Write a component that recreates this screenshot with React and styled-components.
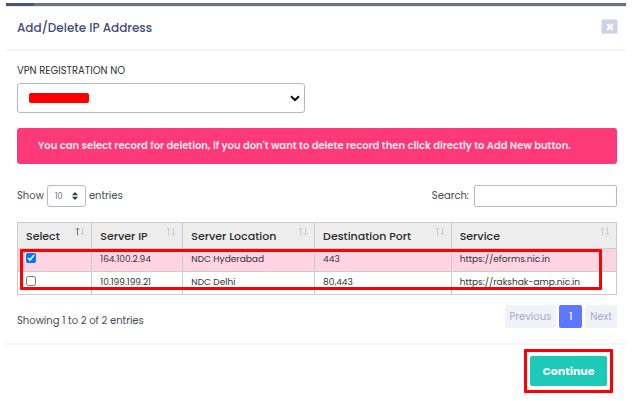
import React, { useState } from "react";
import styled, { createGlobalStyle } from "styled-components";

const Global = createGlobalStyle`
  *, *::before, *::after { box-sizing: border-box; }
  body { margin: 0; background: #fff; }
  body, button, input, select { font-family: Poppins, Inter, sans-serif; }
`;

const Page = styled.div`
  padding: 3px 7px 0 6px;
  color: #4a4b50;
  font-size: 10px;
  line-height: 16px;
`;

const Backdrop = styled.div`
  height: 3px;
  background: linear-gradient(to right, #4b5573 28px, #6f727c 28px);
`;

const Modal = styled.section`
  border-top: 1px solid #e6e9f5;
  background: #fff;
`;

const Header = styled.header`
  display: flex;
  align-items: flex-start;
  justify-content: space-between;
  height: 44px;
  padding: 12px 8px 0 11px;
  border-bottom: 2px solid #f3f3f8;
`;

const Title = styled.h1`
  margin: 1px 0 0;
  font-size: 12px;
  line-height: 16px;
  font-weight: 500;
  color: #464c75;
`;

const CloseButton = styled.button`
  display: grid;
  place-items: center;
  width: 17px;
  height: 15px;
  padding: 0;
  border: 1px solid #e2e5f0;
  border-radius: 2px;
  background: #ced3e4;
`;

const Body = styled.div`
  padding: 12px 9px 14px 11px;
`;

const FieldLabel = styled.label`
  display: block;
  margin-bottom: 4px;
  font-size: 10px;
  color: #333;
`;

const SelectBox = styled.div`
  display: grid;
  width: 48%;
  align-items: center;

  > * { grid-area: 1 / 1; }
  > svg { justify-self: end; margin-right: 5px; pointer-events: none; }
`;

const RegistrationSelect = styled.select`
  appearance: none;
  width: 100%;
  height: 30px;
  border: 1px solid #b4b7cb;
  border-radius: 3px;
  background: #fff;
`;

const Redaction = styled.span`
  width: 60px;
  height: 10px;
  margin-left: 12px;
  border-radius: 2px;
  background: #f00;
  pointer-events: none;
`;

const Alert = styled.div`
  margin-top: 15px;
  padding: 10px 21px;
  border-radius: 3px;
  background: #fd397a;
  color: #ffe6ee;
  font-size: 10px;
  font-weight: 600;
  white-space: nowrap;
`;

const Controls = styled.div`
  display: flex;
  justify-content: space-between;
  margin: 21px 0 15px;
`;

const ControlLabel = styled.label`
  display: flex;
  align-items: center;
  gap: 3px;
`;

const LengthBox = styled.span`
  display: grid;
  align-items: center;
  width: 39px;

  > * { grid-area: 1 / 1; }
  > svg { justify-self: end; margin-right: 8px; pointer-events: none; }
`;

const LengthSelect = styled.select`
  appearance: none;
  width: 100%;
  height: 22px;
  padding: 0 7px;
  border: 1px solid #b4b7cb;
  border-radius: 3px;
  background: #fff;
  color: #6c6f7c;
  font-size: 8px;
`;

const SearchInput = styled.input`
  width: 143px;
  height: 22px;
  margin-left: 2px;
  padding: 0 8px;
  border: 1px solid #b4b7cb;
  border-radius: 2px;
  background: #fff;
`;

const TableWrap = styled.div`
  position: relative;
`;

const RowsMarker = styled.div`
  position: absolute;
  inset: 27px 15px 5px 3px;
  border: 3px solid #f00;
  border-radius: 1px;
  pointer-events: none;
`;

const Table = styled.table`
  width: 100%;
  table-layout: fixed;
  border-collapse: collapse;
`;

const HeadCell = styled.th`
  width: ${(p) => p.$width};
  height: 26px;
  padding: 0 6px 0 8px;
  border: 1px solid #ccc;
  background: #ededed;
  color: #2c2c2c;
  font-size: 11px;
  font-weight: 500;
  text-align: left;
`;

const HeadContent = styled.div`
  display: flex;
  align-items: center;
  justify-content: space-between;
  height: 22px;
  white-space: nowrap;

  > svg { flex: none; margin-bottom: 8px; }
`;

const Row = styled.tr`
  background: ${(p) => (p.$selected ? "#ffd4e2" : "#fff")};
`;

const Cell = styled.td`
  height: 23px;
  padding: 0 8px 2px;
  border: 1px solid #ccc;
  color: #333;
  font-size: 9px;
  line-height: 16px;
  white-space: nowrap;
`;

const Checkbox = styled.input`
  display: block;
  width: 10px;
  height: 10px;
  margin: 0 0 3px;
`;

const TableFooter = styled.div`
  display: flex;
  justify-content: space-between;
  margin-top: 10px;
`;

const Summary = styled.div`
  padding-top: 8px;
`;

const Pagination = styled.nav`
  display: flex;
  gap: 3px;
`;

const PageButton = styled.button`
  min-width: 23px;
  height: 23px;
  padding: 0 5px;
  border: 0;
  border-radius: 2px;
  background: ${(p) => (p.$current ? "#5d78ff" : "#f1f1f8")};
  color: ${(p) => (p.$current ? "#fff" : "#a9acc9")};
  font-size: 10px;
  font-weight: ${(p) => (p.$current ? 500 : 400)};
`;

const Footer = styled.footer`
  display: flex;
  justify-content: flex-end;
  padding: 4px 13px 8px;
  border-top: 2px solid #f5f5f8;
`;

const ButtonMarker = styled.div`
  padding: 4px 3px;
  border: 3px solid #f00;
  border-radius: 1px;
`;

const ContinueButton = styled.button`
  display: block;
  width: 77px;
  height: 30px;
  padding: 0;
  border: 0;
  border-radius: 2px;
  background: #1dc9b7;
  color: #fff;
  font-size: 11px;
  font-weight: 700;
`;

const CloseIcon = () => (
  <svg width="8" height="8" viewBox="0 0 8 8" aria-hidden="true">
    <path d="M1.2 1.2l5.6 5.6M6.8 1.2L1.2 6.8" stroke="#fff" strokeWidth="2.3" />
  </svg>
);

const Chevron = () => (
  <svg width="10" height="7" viewBox="0 0 10 7" fill="none" aria-hidden="true">
    <path d="M1 1.3l4 3.7 4-3.7" stroke="#111" strokeWidth="2.1" />
  </svg>
);

const UpDown = () => (
  <svg width="6" height="8" viewBox="0 0 6 8" fill="#343a40" aria-hidden="true">
    <path d="M3 0l3 3.3H0zM3 8L0 4.7h6z" />
  </svg>
);

const SortIcon = ({ active }) => (
  <svg width="10" height="9" viewBox="0 0 10 9" fill="none" aria-hidden="true">
    <path d="M2.5 8.5V1M.7 2.8L2.5 1l1.8 1.8" stroke={active ? "#777" : "#ccc"} />
    <path d="M7.5.5V8M5.7 6.2L7.5 8l1.8-1.8" stroke="#ccc" />
  </svg>
);

const columns = [
  { label: "Select", width: "12.4%" },
  { label: "Server IP", width: "15.2%" },
  { label: "Server Location", width: "22%" },
  { label: "Destination Port", width: "22.8%" },
  { label: "Service", width: "27.6%" },
];

const records = [
  { ip: "164.100.2.94", location: "NDC Hyderabad", port: "443", service: "https://eforms.nic.in" },
  { ip: "10.199.199.21", location: "NDC Delhi", port: "80,443", service: "https://rakshak-amp.nic.in" },
];

export default function App() {
  const [selected, setSelected] = useState([records[0].ip]);
  const toggle = (ip) =>
    setSelected((s) => (s.includes(ip) ? s.filter((v) => v !== ip) : [...s, ip]));

  return (
    <Page>
      <Global />
      <Backdrop />
      <Modal>
        <Header>
          <Title>Add/Delete IP Address</Title>
          <CloseButton aria-label="Close"><CloseIcon /></CloseButton>
        </Header>
        <Body>
          <FieldLabel htmlFor="registration">VPN REGISTRATION NO</FieldLabel>
          <SelectBox>
            <RegistrationSelect id="registration"><option value="" /></RegistrationSelect>
            <Redaction />
            <Chevron />
          </SelectBox>
          <Alert role="alert">
            You can select record for deletion, if you don't want to delete record then click directly to Add New button.
          </Alert>
          <Controls>
            <ControlLabel>
              Show
              <LengthBox>
                <LengthSelect><option>10</option></LengthSelect>
                <UpDown />
              </LengthBox>
              entries
            </ControlLabel>
            <ControlLabel>
              Search:
              <SearchInput type="search" />
            </ControlLabel>
          </Controls>
          <TableWrap>
            <Table>
              <thead>
                <tr>
                  {columns.map((c, i) => (
                    <HeadCell key={c.label} $width={c.width} scope="col">
                      <HeadContent>{c.label}<SortIcon active={i === 0} /></HeadContent>
                    </HeadCell>
                  ))}
                </tr>
              </thead>
              <tbody>
                {records.map((r) => (
                  <Row key={r.ip} $selected={selected.includes(r.ip)}>
                    <Cell>
                      <Checkbox
                        type="checkbox"
                        aria-label={`Select ${r.ip}`}
                        checked={selected.includes(r.ip)}
                        onChange={() => toggle(r.ip)}
                      />
                    </Cell>
                    <Cell>{r.ip}</Cell>
                    <Cell>{r.location}</Cell>
                    <Cell>{r.port}</Cell>
                    <Cell>{r.service}</Cell>
                  </Row>
                ))}
              </tbody>
            </Table>
            <RowsMarker />
          </TableWrap>
          <TableFooter>
            <Summary>Showing 1 to 2 of 2 entries</Summary>
            <Pagination aria-label="Pages">
              <PageButton>Previous</PageButton>
              <PageButton $current aria-current="page">1</PageButton>
              <PageButton>Next</PageButton>
            </Pagination>
          </TableFooter>
        </Body>
        <Footer>
          <ButtonMarker>
            <ContinueButton>Continue</ContinueButton>
          </ButtonMarker>
        </Footer>
      </Modal>
    </Page>
  );
}
